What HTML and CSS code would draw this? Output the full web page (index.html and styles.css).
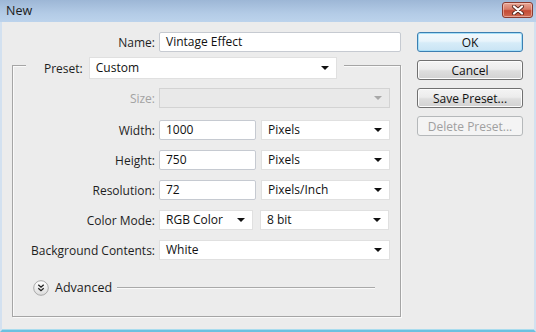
FILE: index.html
```html
<!DOCTYPE html>
<html lang="en">
<head>
  <meta charset="UTF-8" />
  <title>New</title>
  <link rel="stylesheet" href="styles.css">
</head>
<body>
  <div class="window">
    <div class="titlebar">
      <span class="title">New</span>
      <button class="close" aria-label="Close">
        <svg width="14" height="10" viewBox="0 0 14 10">
          <path d="M3 1.5 L11 8.5 M11 1.5 L3 8.5" stroke="#5a2a22" stroke-width="4" stroke-linecap="round"/>
          <path d="M3 1.5 L11 8.5 M11 1.5 L3 8.5" stroke="#fff" stroke-width="2.2" stroke-linecap="round"/>
        </svg>
      </button>
    </div>

    <div class="dialog">
      <div class="settings">
        <div class="row name-row">
          <label class="lbl">Name:</label>
          <div class="field text name-field">Vintage Effect</div>
        </div>

        <div class="group">
          <div class="group-head">
            <label class="head-lbl">Preset:</label>
            <div class="field select preset">Custom<span class="arrow"></span></div>
          </div>

          <div class="group-body">
            <div class="row size-row">
              <label class="lbl disabled">Size:</label>
              <div class="field select full off"><span class="arrow"></span></div>
            </div>
            <div class="row">
              <label class="lbl">Width:</label>
              <div class="field text num">1000</div>
              <div class="field select unit">Pixels<span class="arrow"></span></div>
            </div>
            <div class="row">
              <label class="lbl">Height:</label>
              <div class="field text num">750</div>
              <div class="field select unit">Pixels<span class="arrow"></span></div>
            </div>
            <div class="row">
              <label class="lbl">Resolution:</label>
              <div class="field text num">72</div>
              <div class="field select unit">Pixels/Inch<span class="arrow"></span></div>
            </div>
            <div class="row">
              <label class="lbl">Color Mode:</label>
              <div class="field select mode">RGB Color<span class="arrow"></span></div>
              <div class="field select unit">8 bit<span class="arrow"></span></div>
            </div>
            <div class="row">
              <label class="lbl">Background Contents:</label>
              <div class="field select full">White<span class="arrow"></span></div>
            </div>
          </div>

          <div class="advanced">
            <svg class="adv-icon" width="16" height="16" viewBox="0 0 16 16">
              <defs>
                <linearGradient id="advbg" x1="0" y1="0" x2="0" y2="1">
                  <stop offset="0" stop-color="#ffffff"/>
                  <stop offset="1" stop-color="#dcdcdc"/>
                </linearGradient>
              </defs>
              <circle cx="8" cy="8" r="7.3" fill="url(#advbg)" stroke="#a9a9a9"/>
              <path d="M5.3 4.8 L8 7.2 L10.7 4.8 M5.3 8.3 L8 10.7 L10.7 8.3" fill="none" stroke="#222" stroke-width="1.3"/>
            </svg>
            <span class="adv-text">Advanced</span>
            <span class="adv-line"></span>
          </div>
        </div>
      </div>

      <div class="buttons">
        <button class="btn default">OK</button>
        <button class="btn">Cancel</button>
        <button class="btn">Save Preset...</button>
        <button class="btn" disabled>Delete Preset...</button>
      </div>
    </div>
  </div>
</body>
</html>
```

FILE: styles.css
```css
* {
  box-sizing: border-box;
}
body {
  margin: 0;
  background: #ececec;
  font-family: 'Open Sans', 'Noto Sans', sans-serif;
  font-size: 12px;
  color: #1e1e1e;
}
.window {
  width: 536px;
  height: 332px;
  display: flex;
  flex-direction: column;
}
.titlebar {
  height: 22px;
  display: flex;
  align-items: center;
  justify-content: space-between;
  padding: 0 3px 0 6px;
  background: linear-gradient(#9db7d6, #b3cbe6 60%, #bcd3ec);
}
.title {
  font-size: 12.5px;
  color: #1b1b1b;
  margin-top: -1px;
}
.close {
  width: 31px;
  height: 16px;
  margin-top: -3px;
  padding: 0;
  display: flex;
  align-items: center;
  justify-content: center;
  border: 1px solid #8a3b30;
  border-radius: 3px;
  background: linear-gradient(#e8a797, #d77b67 45%, #c44a34 55%, #cf6a52);
  box-shadow: inset 0 0 0 1px rgba(255, 220, 210, 0.5);
}
.dialog {
  flex: 1;
  display: flex;
  padding: 10px 11px 0 10px;
  border-left: 2px solid #d3e1f0;
  border-right: 2px solid #d3e1f0;
  border-bottom: 2px solid #6cc1e0;
  box-shadow: inset 0 -1px 0 #a9dcee;
}
.settings {
  width: 389px;
}
.row {
  display: flex;
  align-items: center;
  height: 20px;
  gap: 5px;
}
.lbl {
  width: 142px;
  text-align: right;
  margin-right: -1px;
  white-space: nowrap;
}
.name-row .lbl {
  width: 143px;
}
.lbl.disabled {
  color: #a3a3a3;
}
.field {
  height: 20px;
  line-height: 18px;
  padding: 0 6px;
  background: #fff;
  border: 1px solid #d2d4d8;
  white-space: nowrap;
  color: #111;
}
.text {
  border-color: #c6cad1;
  border-radius: 2px;
}
.name-field {
  width: 242px;
}
.select {
  display: flex;
  justify-content: space-between;
  align-items: center;
  border-color: #e0e0e0;
}
.arrow {
  width: 0;
  height: 0;
  margin-right: 1px;
  border-left: 4px solid transparent;
  border-right: 4px solid transparent;
  border-top: 4px solid #111;
}
.off {
  background: #e9e9e9;
  border-color: #d3d3d3;
}
.off .arrow {
  margin-left: auto;
  border-top-color: #a8a8a8;
}
.full {
  width: 231px;
}
.num {
  width: 97px;
}
.unit {
  width: 129px;
}
.mode {
  width: 94px;
  margin-right: 2px;
}
.group {
  margin-top: 13px;
  height: 252px;
  border: 1px solid #a5a5a5;
  box-shadow: inset 1px 1px 0 #fafafa, 1px 1px 0 #fafafa;
}
.group-head {
  display: flex;
  align-items: center;
  gap: 6px;
  width: fit-content;
  margin: -9px 0 0 13px;
  padding: 0 7px 0 18px;
  background: #ececec;
}
.preset {
  width: 248px;
  height: 22px;
  line-height: 20px;
}
.group-body {
  display: flex;
  flex-direction: column;
  gap: 10px;
  padding-top: 9px;
}
.size-row {
  margin-bottom: 2px;
}
.advanced {
  display: flex;
  align-items: center;
  margin: 19px 25px 0 20px;
}
.adv-icon {
  flex: none;
}
.adv-text {
  margin-left: 6px;
  font-size: 12.5px;
}
.adv-line {
  flex: 1;
  height: 1px;
  margin-left: 5px;
  background: #a9a9a9;
  box-shadow: 0 1px 0 #fafafa;
}
.buttons {
  margin-left: 16px;
  width: 106px;
  display: flex;
  flex-direction: column;
  gap: 8px;
}
.btn {
  height: 20px;
  padding: 0;
  font: inherit;
  color: #111;
  border: 1px solid #707070;
  border-radius: 3px;
  background: linear-gradient(#f4f4f4, #ececec 45%, #dedede 55%, #d2d2d2);
  box-shadow: inset 0 0 0 1px #fcfcfc;
}
.btn.default {
  border-color: #3c7fb1;
  background: linear-gradient(#f2f9fd, #e8f4fb 45%, #d6ecf8 55%, #c9e4f4);
  box-shadow: inset 0 0 0 1px #a6dff8;
}
.btn:disabled {
  color: #a0a0a0;
  border-color: #b5b8ba;
  background: #f4f4f4;
  box-shadow: none;
}
```
